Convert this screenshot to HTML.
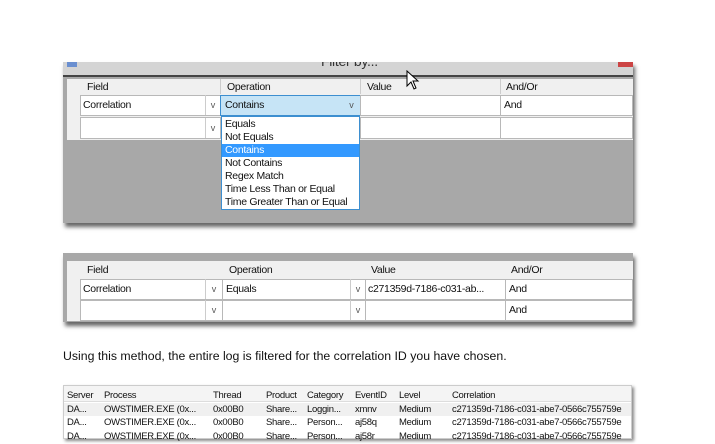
<!DOCTYPE html>
<html><head><style>
body{margin:0;width:715px;height:437px;background:#fff;position:relative;overflow:hidden;font-family:"Liberation Sans",sans-serif;}
.a{position:absolute;box-sizing:border-box;}
.t{font-size:10.5px;color:#111;white-space:nowrap;letter-spacing:-0.3px}
.cell{background:#fff;border:1px solid #b8b8b8;}
.arr{font-size:9px;color:#555;text-align:center;line-height:20px}
</style></head><body>
<!-- window 1 -->
<div class="a" style="left:63px;top:62px;width:570px;height:161px;background:#a8a8a8;box-shadow:2px 4px 4px #666;"></div>
<div class="a" style="left:63px;top:62px;width:570px;height:15px;background:#d4d4d4;border-bottom:2px solid #444;overflow:hidden">
 <div class="a t" style="left:258px;top:-9px;font-size:14px;color:#333">Filter by...</div>
 <div class="a" style="left:4px;top:0;width:10px;height:5px;background:#6a8fd0"></div>
 <div class="a" style="left:555px;top:0;width:15px;height:5px;background:#c44"></div>
</div>
<div class="a" style="left:67px;top:79px;width:566px;height:61px;background:#f0f0f0"></div>
<div class="a t" style="left:87px;top:81px">Field</div>
<div class="a t" style="left:227px;top:81px">Operation</div>
<div class="a t" style="left:367px;top:81px">Value</div>
<div class="a t" style="left:506px;top:81px">And/Or</div>
<div class="a" style="left:220px;top:79px;width:1px;height:15px;background:#ccc"></div>
<div class="a" style="left:360px;top:79px;width:1px;height:15px;background:#ccc"></div>
<div class="a" style="left:500px;top:79px;width:1px;height:15px;background:#ccc"></div>
<div class="a cell" style="left:80px;top:95px;width:141px;height:21px"></div>
<div class="a t" style="left:83px;top:99px">Correlation</div>
<div class="a arr" style="left:205px;top:95px;width:15px;border-left:1px solid #ccc">v</div>
<div class="a" style="left:220px;top:95px;width:141px;height:21px;background:#c6e4f6;border:1px solid #3d8fd0"></div>
<div class="a t" style="left:225px;top:99px">Contains</div>
<div class="a arr" style="left:344px;top:95px;width:15px">v</div>
<div class="a cell" style="left:360px;top:95px;width:141px;height:21px"></div>
<div class="a cell" style="left:500px;top:95px;width:133px;height:21px"></div>
<div class="a t" style="left:504px;top:99px">And</div>
<div class="a cell" style="left:80px;top:117px;width:141px;height:22px"></div>
<div class="a arr" style="left:205px;top:118px;width:15px;border-left:1px solid #ccc">v</div>
<div class="a cell" style="left:360px;top:117px;width:141px;height:22px"></div>
<div class="a cell" style="left:500px;top:117px;width:133px;height:22px"></div>
<div class="a" style="left:221px;top:116px;width:139px;height:94px;background:#fff;border:1px solid #3d8fd0"></div>
<div class="a" style="left:222px;top:144px;width:137px;height:13px;background:#3399ff"></div>
<div class="a t" style="left:225px;top:118px;line-height:13px">Equals<br>Not Equals<br><span style="color:#fff">Contains</span><br>Not Contains<br>Regex Match<br>Time Less Than or Equal<br>Time Greater Than or Equal</div>
<svg class="a" style="left:406px;top:70px" width="14" height="22"><path d="M1 1 L1 16 L5 12 L8 19 L10 18 L7 11 L12 11 Z" fill="#fff" stroke="#000"/></svg>

<!-- window 2 -->
<div class="a" style="left:63px;top:253px;width:570px;height:69px;background:#a8a8a8;box-shadow:2px 4px 4px #666;"></div>
<div class="a" style="left:67px;top:261px;width:566px;height:60px;background:#f0f0f0"></div>
<div class="a t" style="left:87px;top:264px">Field</div>
<div class="a t" style="left:229px;top:264px">Operation</div>
<div class="a t" style="left:371px;top:264px">Value</div>
<div class="a t" style="left:511px;top:264px">And/Or</div>
<div class="a cell" style="left:80px;top:279px;width:143px;height:21px"></div>
<div class="a t" style="left:83px;top:283px">Correlation</div>
<div class="a arr" style="left:205px;top:279px;width:17px;border-left:1px solid #ccc">v</div>
<div class="a cell" style="left:222px;top:279px;width:144px;height:21px"></div>
<div class="a t" style="left:226px;top:283px">Equals</div>
<div class="a arr" style="left:350px;top:279px;width:15px;border-left:1px solid #ccc">v</div>
<div class="a cell" style="left:365px;top:279px;width:141px;height:21px"></div>
<div class="a t" style="left:368px;top:283px">c271359d-7186-c031-ab...</div>
<div class="a cell" style="left:505px;top:279px;width:128px;height:21px"></div>
<div class="a t" style="left:509px;top:283px">And</div>
<div class="a cell" style="left:80px;top:300px;width:143px;height:21px"></div>
<div class="a arr" style="left:205px;top:300px;width:17px;border-left:1px solid #ccc">v</div>
<div class="a cell" style="left:222px;top:300px;width:144px;height:21px"></div>
<div class="a arr" style="left:350px;top:300px;width:15px;border-left:1px solid #ccc">v</div>
<div class="a cell" style="left:365px;top:300px;width:141px;height:21px"></div>
<div class="a cell" style="left:505px;top:300px;width:128px;height:21px"></div>
<div class="a t" style="left:509px;top:304px">And</div>

<div class="a" style="left:63px;top:349px;font-size:12.3px;color:#111;white-space:nowrap">Using this method, the entire log is filtered for the correlation ID you have chosen.</div>

<!-- grid 3 -->
<div class="a" style="left:63px;top:385px;width:569px;height:54px;background:#fff;border:1px solid #ccc;box-shadow:2px 2px 3px #888"></div>
<div class="a" style="left:64px;top:386px;width:567px;height:16px;background:#f4f4f4;border-bottom:1px solid #ddd"></div>
<div class="a" style="left:64px;top:403px;width:567px;height:13px;background:#f0f0f0"></div>
<div class="a t" style="left:67px;top:389px;font-size:9.5px;line-height:13.7px">Server<br>DA...<br>DA...<br>DA...</div>
<div class="a t" style="left:104px;top:389px;font-size:9.5px;line-height:13.7px">Process<br>OWSTIMER.EXE (0x...<br>OWSTIMER.EXE (0x...<br>OWSTIMER.EXE (0x...</div>
<div class="a t" style="left:213px;top:389px;font-size:9.5px;line-height:13.7px">Thread<br>0x00B0<br>0x00B0<br>0x00B0</div>
<div class="a t" style="left:266px;top:389px;font-size:9.5px;line-height:13.7px">Product<br>Share...<br>Share...<br>Share...</div>
<div class="a t" style="left:307px;top:389px;font-size:9.5px;line-height:13.7px">Category<br>Loggin...<br>Person...<br>Person...</div>
<div class="a t" style="left:355px;top:389px;font-size:9.5px;line-height:13.7px">EventID<br>xmnv<br>aj58q<br>aj58r</div>
<div class="a t" style="left:399px;top:389px;font-size:9.5px;line-height:13.7px">Level<br>Medium<br>Medium<br>Medium</div>
<div class="a t" style="left:452px;top:389px;font-size:9.5px;line-height:13.7px">Correlation<br>c271359d-7186-c031-abe7-0566c755759e<br>c271359d-7186-c031-abe7-0566c755759e<br>c271359d-7186-c031-abe7-0566c755759e</div>
</body></html>
